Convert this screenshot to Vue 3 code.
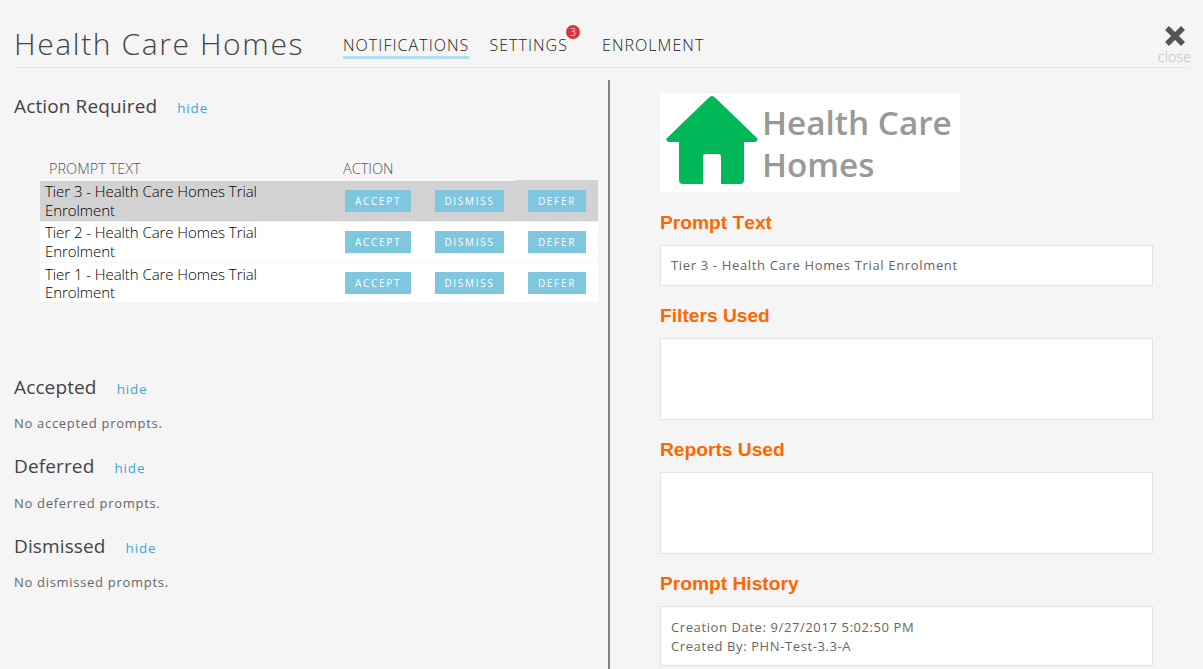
<script setup>
const rows = ['Tier 3', 'Tier 2', 'Tier 1']
const sections = [
  { title: 'Accepted', text: 'No accepted prompts.', gap: 'g1' },
  { title: 'Deferred', text: 'No deferred prompts.', gap: 'g2' },
  { title: 'Dismissed', text: 'No dismissed prompts.', gap: 'g3' }
]
</script>

<template>
  <div class="page">
    <header class="head">
      <h1 class="title">Health Care Homes</h1>
      <nav class="nav">
        <a class="tab active">NOTIFICATIONS</a>
        <a class="tab settings">SETTINGS<span class="badge">3</span></a>
        <a class="tab enrol">ENROLMENT</a>
      </nav>
      <div class="close">
        <svg width="20" height="20" viewBox="0 0 20 20"><path d="M2 2 L18 18 M18 2 L2 18" stroke="#555" stroke-width="5.500"/></svg>
        <span>close</span>
      </div>
    </header>
    <main class="body">
      <section class="left">
        <div class="sec-head first"><h2>Action Required</h2><a class="hide">hide</a></div>
        <div class="table">
          <div class="thead"><span class="th1">PROMPT TEXT</span><span>ACTION</span></div>
          <div v-for="(r, i) in rows" :key="r" class="row" :class="{ selected: i === 0, last: i === 2 }">
            <div class="prompt">{{ r }} - Health Care Homes Trial Enrolment</div>
            <button class="btn b1">ACCEPT</button>
            <button class="btn b2">DISMISS</button>
            <button class="btn b3">DEFER</button>
          </div>
        </div>
        <div v-for="s in sections" :key="s.title" class="sec" :class="s.gap">
          <div class="sec-head"><h2>{{ s.title }}</h2><a class="hide">hide</a></div>
          <p class="none">{{ s.text }}</p>
        </div>
      </section>
      <section class="right">
        <div class="logo">
          <svg class="house" width="92" height="92" viewBox="0 0 92 92">
            <path d="M46 2 Q47.500 2 49 3.500 L91 44 Q93 47 89 48 L78 48 L78 86 Q78 90 74 90 L55 90 L55 63 Q55 60 52 60 L40 60 Q37 60 37 63 L37 90 L17 90 Q13 90 13 86 L13 48 L3 48 Q-1 47 1 44 L43 3.500 Q44.500 2 46 2 Z" fill="#00b858"/>
          </svg>
          <div class="logo-text">Health Care<br>Homes</div>
        </div>
        <h3>Prompt Text</h3>
        <div class="box one">Tier 3 - Health Care Homes Trial Enrolment</div>
        <h3>Filters Used</h3>
        <div class="box tall"></div>
        <h3>Reports Used</h3>
        <div class="box tall"></div>
        <h3>Prompt History</h3>
        <div class="box hist">Creation Date: 9/27/2017 5:02:50 PM<br>Created By: PHN-Test-3.3-A</div>
      </section>
    </main>
  </div>
</template>

<style scoped>
.page { width: 1203px; height: 669px; overflow: hidden; background: #f5f5f5; font-family: "Open Sans", sans-serif; color: #555; }
.head { position: relative; display: flex; align-items: flex-start; margin: 0 13px 0 14px; border-bottom: 1px solid #e9e9e9; height: 67px; }
.title { margin: 26px 0 0; width: 329px; font-size: 30px; line-height: 36px; font-weight: 300; letter-spacing: 1.6px; color: #444; white-space: nowrap; }
.nav { display: flex; margin-top: 35px; }
.tab { font-size: 16px; line-height: 20px; letter-spacing: 1.05px; color: #222; font-weight: 300; height: 24px; box-sizing: border-box; white-space: nowrap; position: relative; }
.tab.active { border-bottom: 3px solid #b0deec; }
.settings { margin-left: 20px; }
.enrol { margin-left: 34px; }
.badge { position: absolute; top: -10px; right: -12px; width: 14px; height: 14px; border-radius: 50%; background: #d9343f; color: #fff; font-size: 10px; line-height: 14px; text-align: center; letter-spacing: 0; }
.close { position: absolute; right: -1px; top: 26px; width: 33px; display: flex; flex-direction: column; align-items: center; color: #bbb; font-size: 14.500px; line-height: 17px; font-weight: 300; }
.close svg { display: block; margin-bottom: 2px; }
.body { display: flex; }
.left { width: 608px; height: 601px; box-sizing: border-box; padding: 25px 10px 0 14px; position: relative; }
.left::after { content: ""; position: absolute; right: -2px; top: 12px; bottom: 0; width: 2px; background: #808080; }
.sec-head { display: flex; align-items: baseline; }
h2 { margin: 0; font-size: 19px; line-height: 26px; font-weight: 400; letter-spacing: 0.13px; color: #444; }
.hide { margin-left: 20px; font-size: 13.500px; letter-spacing: 0.85px; color: #3ea6d3; }
.table { margin: 37px 0 0 26px; width: 558px; }
.thead { display: flex; height: 25px; align-items: center; font-size: 14.500px; font-weight: 300; color: #555; box-sizing: border-box; }
.th1 { margin-left: 9px; width: 294px; }
.row { position: relative; display: grid; grid-template-columns: 281px 66px 69px 58px; column-gap: 24px; align-items: center; background: #fff; height: 40px; margin-bottom: 1px; color: #111; }
.row.selected { background: #d2d2d2; }
.row.selected::before { content: ""; position: absolute; right: 0; top: -1px; width: 82px; height: 1px; background: #d2d2d2; }
.row.last { height: 39px; margin: 0; overflow: hidden; }
.prompt { width: 236px; margin-left: 5px; font-size: 15px; font-weight: 300; line-height: 19px; letter-spacing: -0.07px; color: #000; }
.last .prompt { line-height: 18px; }
.btn { height: 22px; padding: 0; border: 0; background: #7fc6df; color: #fff; font-family: inherit; font-size: 10px; letter-spacing: 1.7px; }
.sec { width: 100%; }
.none { margin: 14px 0 0; font-size: 13px; line-height: 18px; letter-spacing: 0.7px; color: #666; }
.g1 { margin-top: 72px; }
.g2 { margin-top: 21px; }
.g2 .none { margin-top: 15px; }
.g3 { margin-top: 21px; }
.right { padding: 25px 0 0 52px; width: 493px; }
.logo { display: flex; width: 300px; height: 99px; margin-bottom: 20px; background: #fff; }
.house { margin: 1px 0 0 6px; display: block; flex: none; }
.logo-text { margin: 8px 0 0 4px; font-size: 33.300px; line-height: 42px; font-weight: 600; color: #999; white-space: nowrap; }
h3 { margin: 19px 0 11px; font-family: "Liberation Sans", sans-serif; font-size: 19.200px; line-height: 22px; font-weight: 700; font-kerning: none; color: #f60; }
.box { width: 493px; box-sizing: border-box; background: #fff; border: 1px solid #e3e3e3; font-size: 13px; line-height: 19px; letter-spacing: 0.66px; color: #666; padding: 0 10px; }
.one { height: 41px; line-height: 39px; }
.tall { height: 82px; }
.hist { height: 60px; padding-top: 11px; letter-spacing: 0.6px; }
</style>

<style>
html, body { margin: 0; background: #f5f5f5; }
</style>
